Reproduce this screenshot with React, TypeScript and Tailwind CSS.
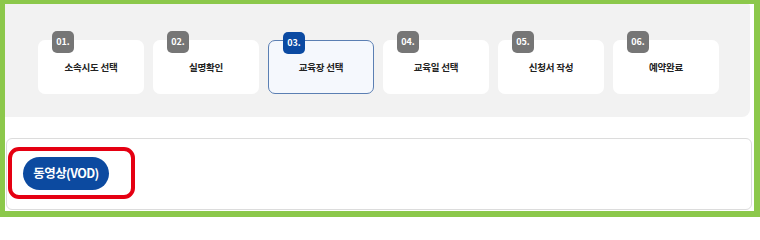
import React from 'react';

type Step = {
    no: string
    label: string
    active?: boolean
}

const steps: Step[] = [
    { no: '01.', label: '소속시도 선택' },
    { no: '02.', label: '실명확인' },
    { no: '03.', label: '교육장 선택', active: true },
    { no: '04.', label: '교육일 선택' },
    { no: '05.', label: '신청서 작성' },
    { no: '06.', label: '예약완료' },
];

const StepCard = ({ step }: { step: Step }) => (
    <div
        className={
            step.active
                ? 'relative w-[106px] h-[54px] rounded-[7px] border border-[#5b7fb3] bg-[#f5f8fd] flex items-center justify-center'
                : 'relative w-[106px] h-[54px] rounded-[7px] bg-white flex items-center justify-center'
        }
    >
        <span
            className={
                step.active
                    ? 'absolute left-[14px] -top-[9px] w-[22px] h-[22px] rounded-[5px] bg-[#0b4aa2] text-white text-[9px] font-bold flex items-center justify-center'
                    : 'absolute left-[14px] -top-[9px] w-[22px] h-[22px] rounded-[5px] bg-[#767676] text-white text-[9px] font-bold flex items-center justify-center'
            }
        >
            {step.no}
        </span>
        <span className="mt-[1px] text-[9.5px] font-bold text-[#222] tracking-[-0.2px]">{step.label}</span>
    </div>
);

export default function App() {
    return (
        <div
            className="w-[760px] h-[217px] bg-[#8cc84b] pt-[4px] pl-[5px] pr-[6px] pb-[6px]"
            style={{ fontFamily: '"Noto Sans CJK KR", "Noto Sans", sans-serif' }}
        >
            <div className="w-full h-full bg-white flex flex-col">
                <div className="w-[745px] h-[113px] bg-[#f2f2f2] rounded-br-[8px] rounded-tr-[2px] flex justify-center gap-[9px] pt-[36px] pl-[2px]">
                    {steps.map((step) => (
                        <StepCard key={step.no} step={step} />
                    ))}
                </div>
                <div className="mt-[21px] ml-[1px] w-[746px] h-[72px] border border-[#dcdcdc] rounded-[6px] pl-[1px] pt-[8px]">
                    <div className="w-[127px] h-[52px] border-4 border-[#e50012] rounded-[11px] pl-[11px] pt-[6px]">
                        <button className="w-[86px] h-[33px] rounded-full bg-[#0c4aa0] text-white text-[12.5px] font-bold tracking-[-0.6px] flex items-center justify-center">
                            동영상(VOD)
                        </button>
                    </div>
                </div>
            </div>
        </div>
    );
}
